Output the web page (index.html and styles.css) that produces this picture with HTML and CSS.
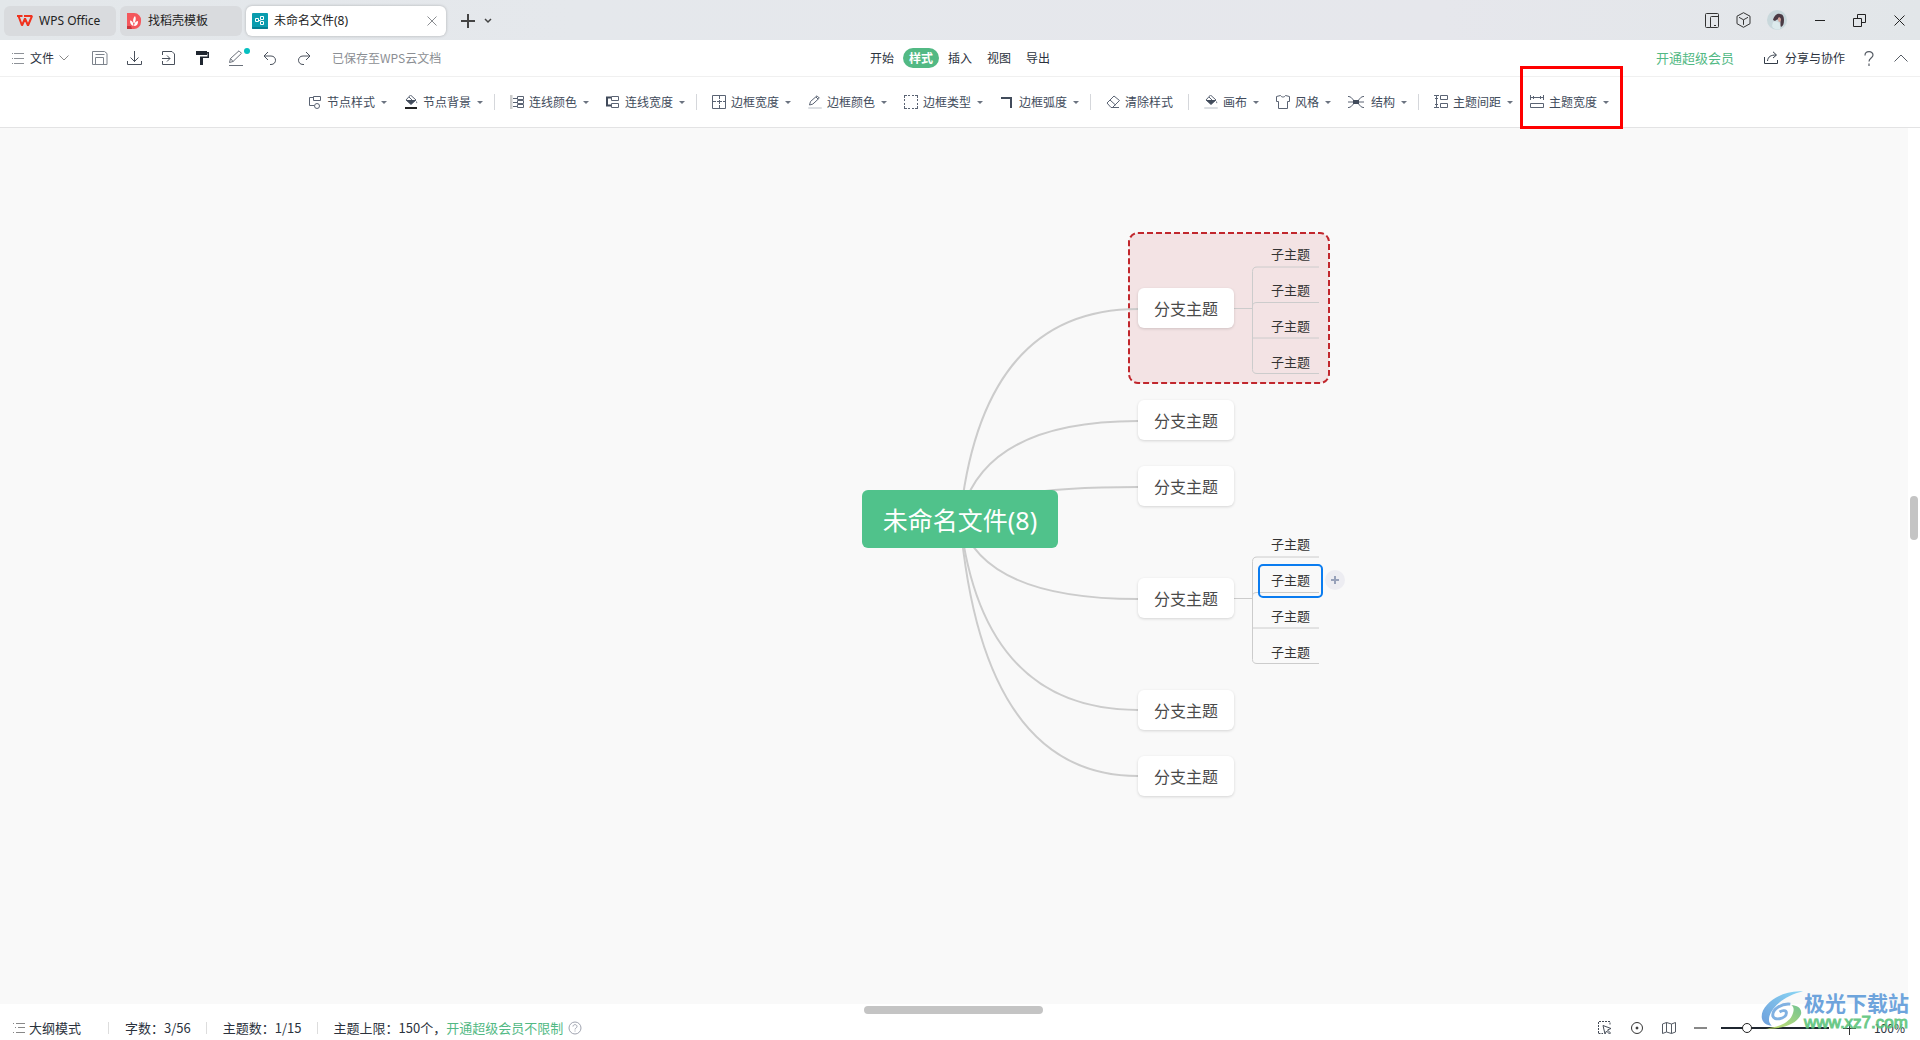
FILE: index.html
```html
<!DOCTYPE html>
<html lang="zh-CN">
<head>
<meta charset="utf-8">
<title>未命名文件(8)</title>
<link rel="stylesheet" href="styles.css">
</head>
<body>
<div class="app">
  <header class="titlebar">
    <nav class="tabs">
      <button class="tab tab-home">
        <svg width="16" height="12" viewBox="0 0 16 12" fill="none" stroke="#f0321e" stroke-width="2" stroke-linejoin="bevel"><path d="M0 1h5.500M1.500 1L5 10.500 8 3.500 11 10.500 15 1H7"/></svg>
        <span>WPS Office</span>
      </button>
      <button class="tab tab-docer">
        <svg width="16" height="16" viewBox="0 0 16 16"><path d="M1 0h7a7 7 0 0 1 7 8v1a7 7 0 0 1-7 7H1z" fill="#f4575c"/><path d="M1 13h4l1 3H1z" fill="#c9353b"/><path d="M7.500 13C5 12 4 10.500 4 7.500c1.800.3 2.700 1.300 3.200 3zM7.500 10C6.500 7 7.500 4.500 9 3c1.200 2 1 4.500-.5 7zM8 13c.2-3 1.500-4.500 4-5 .3 3-1.200 5-4 5z" fill="#fff"/></svg>
        <span>找稻壳模板</span>
      </button>
      <div class="tab tab-active">
        <svg width="16" height="16" viewBox="0 0 16 16"><rect width="16" height="16" rx="1" fill="#0a9cae"/><path d="M0 14h16v1a1 1 0 0 1-1 1H1a1 1 0 0 1-1-1z" fill="#067f93"/><path d="M3.500 5.500h3v3h-3zM6.500 7.500h2M8.500 3.500h3v3h-3zM8.500 8.500h3v3h-3z" fill="none" stroke="#fff"/></svg>
        <span>未命名文件(8)</span>
        <button class="icon-btn tab-close" aria-label="关闭"><svg width="10" height="10" viewBox="0 0 10 10" stroke="#8a8d91"><path d="M.5.5l9 9M9.500.5l-9 9"/></svg></button>
      </div>
      <button class="icon-btn tab-add" aria-label="新建"><svg width="14" height="14" viewBox="0 0 14 14" stroke="#444" stroke-width="2"><path d="M7 0v14M0 7h14"/></svg></button>
      <button class="icon-btn" aria-label="更多"><svg width="8" height="6" viewBox="0 0 8 6" fill="none" stroke="#444" stroke-width="1.500"><path d="M1 1l3 3 3-3"/></svg></button>
    </nav>
    <div class="window-tools">
      <button class="icon-btn" aria-label="分屏"><svg width="15" height="15" viewBox="0 0 15 15" fill="none" stroke="#333"><path d="M5.500 14.500H1.500a1 1 0 0 1-1-1v-12a1 1 0 0 1 1-1h11a1 1 0 0 1 1 1v12a1 1 0 0 1-1 1h-7V4.500a1 1 0 0 1 1-1h7M9 12.500h2"/></svg></button>
      <button class="icon-btn" aria-label="应用"><svg width="15" height="16" viewBox="0 0 15 16" fill="none" stroke="#333"><path d="M7.500.7l6.500 3.500v7.500l-6.500 3.600L1 11.700V4.200zM3 5.300l4.500 2.500L12 5.300M7.500 7.800v5"/></svg></button>
      <button class="icon-btn" aria-label="账号"><svg width="20" height="20" viewBox="0 0 20 20"><circle cx="10" cy="10" r="10" fill="#c9d8dc"/><path d="M6 10c1-4 4-7 7-6 3 0 4 3 4 6 0 4-1 6-3 7-1-2 0-4-1-7-2-2-4 0-5 1z" fill="#4a3a44"/><path d="M11 8c1-1 2-1 3 1 0 2-1 3-1 3-2 0-2-2-2-4z" fill="#d4a59c"/><path d="M6 12c3-1 6 0 7 2v5c-3 1-7 0-8-3z" fill="#dceaec"/></svg></button>
      <button class="icon-btn" aria-label="最小化"><svg width="10" height="11" viewBox="0 0 10 11" stroke="#222"><path d="M0 5.500h10"/></svg></button>
      <button class="icon-btn" aria-label="还原"><svg width="13" height="13" viewBox="0 0 13 13" fill="none" stroke="#222"><path d="M.5 4.500h8v8h-8zM4.500 4.500v-4h8v8h-4"/></svg></button>
      <button class="icon-btn" aria-label="关闭窗口"><svg width="11" height="11" viewBox="0 0 11 11" stroke="#222"><path d="M.5.500l10 10M10.500.500l-10 10"/></svg></button>
    </div>
  </header>

  <div class="menubar">
    <div class="quick">
      <button class="icon-btn file-btn">
        <svg width="13" height="12" viewBox="0 0 13 12" stroke="#8d9197"><path d="M0 1.500h1M2 1.500h10M0 6.500h1M2 6.500h10M0 11.500h1M2 11.500h10"/></svg>
        <span>文件</span>
        <svg width="10" height="6" viewBox="0 0 10 6" fill="none" stroke="#888"><path d="M.5.5L5 5 9.500.5"/></svg>
      </button>
      <div class="quick-icons">
      <button class="icon-btn" aria-label="保存"><svg width="16" height="16" viewBox="0 0 16 16" fill="none" stroke="#7d838c"><path d="M.5 1.500h12l2.500 2v11H.5zM3.500 14.500v-7h8v7M3.500 4.500h9"/></svg></button>
      <button class="icon-btn" aria-label="下载"><svg width="16" height="16" viewBox="0 0 16 16" fill="none" stroke="#4a515c"><path d="M8.500 1v11M4.500 7.500l4 4 4-4M1.500 11v3.500h14V11"/></svg></button>
      <button class="icon-btn" aria-label="导出"><svg width="16" height="16" viewBox="0 0 16 16" fill="none" stroke="#4a515c"><path d="M2.500 5V1.500H12l2.500 2.500v10.500h-12V11M2 8.500h8M7 5.500l3 3-3 3"/></svg></button>
      <button class="icon-btn" aria-label="格式刷"><svg width="16" height="16" viewBox="0 0 16 16" fill="#1f2630"><path d="M2 1h11v1h2v6H9v7H6V6.500h7.500v-3H13V5H2z"/></svg></button>
      <button class="icon-btn dotted" aria-label="画笔"><svg width="16" height="16" viewBox="0 0 16 16" fill="none" stroke="#6a707a"><path d="M1.500 12.500l1-4L11 .8l2.500 2.500-8.500 8.200zM2.500 8.500L5 11.500M1 15.500h14"/></svg></button>
      <button class="icon-btn" aria-label="撤销"><svg width="16" height="16" viewBox="0 0 16 16" fill="none" stroke="#4a515c"><path d="M6 2L2 6l4 4M2 6h7c6 0 6 8.500 0 8.500H8"/></svg></button>
      <button class="icon-btn" aria-label="重做"><svg width="16" height="16" viewBox="0 0 16 16" fill="none" stroke="#4a515c"><path d="M10 2l4 4-4 4M14 6H7c-6 0-6 8.500 0 8.500h1"/></svg></button>
      </div>
      <span class="saved">已保存至WPS云文档</span>
    </div>
    <nav class="modes">
      <button class="mode">开始</button>
      <button class="mode mode-on">样式</button>
      <button class="mode">插入</button>
      <button class="mode">视图</button>
      <button class="mode">导出</button>
    </nav>
    <div class="account">
      <a class="vip" href="#vip">开通超级会员</a>
      <button class="icon-btn share"><svg width="15" height="14" viewBox="0 0 15 14" fill="none" stroke="#333c48"><path d="M.5 6v6.500h13V9M3.500 10C4 5.500 7 4 12 4M9 .8L12.500 4 9 7"/></svg><span>分享与协作</span></button>
      <button class="icon-btn help" aria-label="帮助"><svg width="10" height="15" viewBox="0 0 10 15" fill="none" stroke="#555b64" stroke-width="1.200"><path d="M1 4.500C1-.5 9-.5 9 4c0 3-4 3-4 6.500M5 12.500V15"/></svg></button>
      <button class="icon-btn" aria-label="收起"><svg width="14" height="8" viewBox="0 0 14 8" fill="none" stroke="#555b64"><path d="M.5 7.500L7 1l6.500 6.500"/></svg></button>
    </div>
  </div>

  <div class="toolbar">
    <button class="tool"><svg class="ti" viewBox="0 0 14 14"><path d="M5.500 1.500h7v4h-7zM5 2.500H1.500v8H6"/><circle cx="9" cy="11" r="2.500"/></svg><span>节点样式</span><i class="caret"></i></button>
    <button class="tool"><svg class="ti" viewBox="0 0 14 14"><path d="M6.500 0L12 5 7 9.500 2 5zM5 2l3 3" /><path class="solid" d="M2 5h10L7 9.500z"/><path class="solid" d="M12.500 6c2 3-1 3 0 0z"/><path class="under-dark" d="M1 13h12"/></svg><span>节点背景</span><i class="caret"></i></button>
    <span class="sep"></span>
    <button class="tool"><svg class="ti" viewBox="0 0 14 14"><path class="under-grey" d="M1 0v14"/><path d="M7.500 1.500h6v3h-6zM7.500 5.500h6v3h-6zM7.500 9.500h6v3h-6zM3 3.500h4M3 7.500h4M3 11.500h4"/></svg><span>连线颜色</span><i class="caret"></i></button>
    <button class="tool"><svg class="ti" viewBox="0 0 14 14"><path d="M5.500 1.500h7v4h-7zM5.500 8.500h7v4h-7z"/><path class="thick" d="M5 2.500H1v8h4"/></svg><span>连线宽度</span><i class="caret"></i></button>
    <span class="sep"></span>
    <button class="tool"><svg class="ti" viewBox="0 0 14 14"><path d="M.5.5h13v13H.5z"/><path d="M7.500 1v3M7.500 5v4M7.500 10v3M1 6.500h3M5 6.500h5M11 6.500h2"/></svg><span>边框宽度</span><i class="caret"></i></button>
    <button class="tool"><svg class="ti" viewBox="0 0 14 14"><path d="M1.500 10l1-3.500L9 .8l2.300 2.300-6.500 6zM8 2l2 2"/><path class="light" d="M.5 12.500h13v1H.5z"/></svg><span>边框颜色</span><i class="caret"></i></button>
    <button class="tool"><svg class="ti" viewBox="0 0 14 14"><path d="M0 .5h3M4 .5h2M8 .5h2M11 .5h3M0 13.500h3M4 13.500h2M8 13.500h2M11 13.500h3M.5 1v2M.5 4v2M.5 8v2M.5 11v2M13.500 1v2M13.500 4v2M13.500 8v2M13.500 11v2"/></svg><span>边框类型</span><i class="caret"></i></button>
    <button class="tool"><svg class="ti" viewBox="0 0 14 14"><path class="thick" d="M1 3h10v10"/></svg><span>边框弧度</span><i class="caret"></i></button>
    <span class="sep"></span>
    <button class="tool tool-clear"><svg class="ti" viewBox="0 0 14 14"><path d="M1 8L8 1l5.500 4.500L6.500 12.500H5zM4 5l5.500 5M6 12.500h7"/></svg><span>清除样式</span></button>
    <span class="sep"></span>
    <button class="tool"><svg class="ti" viewBox="0 0 14 14"><path d="M6.500 0L12 5 7 9.500 2 5zM5 2l3 3"/><path class="solid" d="M2 5h10L7 9.500z"/><path class="solid" d="M12.500 6c2 3-1 3 0 0z"/><path class="light" d="M.5 12.500h13v1H.5z"/></svg><span>画布</span><i class="caret"></i></button>
    <button class="tool"><svg class="ti" viewBox="0 0 14 14"><path d="M4.500.5L.5 1.500v5h2v7h9v-7h2v-5l-4-1c-1 2-4 2-5 0z"/></svg><span>风格</span><i class="caret"></i></button>
    <button class="tool tool-structure"><svg class="ti ti-wide" viewBox="0 0 16 14"><path d="M0 1.500h1c3 0 4 5 7 5s4-5 7-5h1M0 12.500h1c3 0 4-5 7-5s4 5 7 5h1M0 7h16"/><path class="solid" d="M5 5h6v4H5z"/></svg><span>结构</span><i class="caret"></i></button>
    <span class="sep"></span>
    <button class="tool"><svg class="ti" viewBox="0 0 14 14"><path d="M0 .5h5M0 12.500h5M2.500 1v11M1 3.500h3M1 9.500h3M6.500 .5h7v4h-7zM6.500 8.500h7v4h-7z"/></svg><span>主题间距</span><i class="caret"></i></button>
    <button class="tool tool-marked"><svg class="ti" viewBox="0 0 14 14"><path d="M.5 0v5M13.500 0v5M1 2.500h12M3.500 1v3M10.500 1v3M.5 8.500h13v4H.5z"/></svg><span>主题宽度</span><i class="caret"></i></button>
  </div>

  <main class="workspace">
    <div class="canvas">
      <div class="stage">
        <svg class="links" viewBox="500 228 908 676" fill="none" stroke="#ccc">
          <rect x="1129" y="233" width="200" height="150" rx="9" fill="#c1272d" fill-opacity=".1" stroke="#c1272d" stroke-width="2" stroke-dasharray="6 3"/>
          <g stroke-width="2">
            <path d="M960 519Q982 309 1138 309"/>
            <path d="M960 519Q982 421 1138 421"/>
            <path d="M960 519Q982 487 1138 487"/>
            <path d="M960 519Q982 599 1138 599"/>
            <path d="M960 519Q982 710 1138 710"/>
            <path d="M960 519Q982 776 1138 776"/>
          </g>
          <path d="M1234 308.500h18M1319 267h-62q-4.500 0-4.500 4.500v98q0 4 4.500 4h62M1252.500 306q0-3.500 4.500-3.500h62M1252.500 338h66.500"/>
          <path d="M1234 598.500h18M1319 557h-62q-4.500 0-4.500 4.500v98q0 4 4.500 4h62M1252.500 596q0-3.500 4.500-3.500h62M1252.500 628h66.500"/>
        </svg>
        <div class="root">未命名文件(8)</div>
        <div class="branch b1">分支主题</div>
        <div class="branch b2">分支主题</div>
        <div class="branch b3">分支主题</div>
        <div class="branch b4">分支主题</div>
        <div class="branch b5">分支主题</div>
        <div class="branch b6">分支主题</div>
        <ul class="leaves l1"><li>子主题</li><li>子主题</li><li>子主题</li><li>子主题</li></ul>
        <ul class="leaves l2"><li>子主题</li><li class="selected">子主题</li><li>子主题</li><li>子主题</li></ul>
        <button class="add-node" aria-label="添加子主题"><svg width="8" height="8" viewBox="0 0 8 8" stroke="#98a2ba" stroke-width="2"><path d="M4 0v8M0 4h8"/></svg></button>
      </div>
    </div>
    <div class="vscroll"><div class="thumb"></div></div>
  </main>
  <div class="hscroll"><div class="thumb"></div></div>

  <footer class="status">
    <div class="stats">
      <button class="icon-btn outline"><svg width="12" height="12" viewBox="0 0 12 12" stroke="#888"><path d="M0 1.500h1M3 1.500h9M2 5.500h1M5 5.500h7M0 10.500h1M3 10.500h9"/></svg><span>大纲模式</span></button>
      <span class="stat">字数：3/56</span>
      <span class="stat">主题数：1/15</span>
      <span class="stat">主题上限：150个，<a class="vip" href="#limit">开通超级会员不限制</a></span>
      <button class="icon-btn tip" aria-label="说明"><svg width="14" height="14" viewBox="0 0 14 14" fill="none" stroke="#a0a4b0"><circle cx="7" cy="7" r="6"/><path d="M5 5.500c0-2.500 4-2.500 4 0C9 7 7 7 7 8.500M7 9.500v1"/></svg></button>
    </div>
    <div class="view">
      <button class="icon-btn" aria-label="框选"><svg width="14" height="14" viewBox="0 0 14 14" fill="none" stroke="#444b56"><path d="M.5 12V.5H12V4M.5 12.500H5" stroke-dasharray="2 1"/><path d="M5 4.500l8 3-3.500 1.500 3 3-1 1-3-3L7 13z"/></svg></button>
      <button class="icon-btn" aria-label="定位"><svg width="14" height="14" viewBox="0 0 14 14" fill="none" stroke="#333"><circle cx="7" cy="7" r="5.500"/><circle cx="7" cy="7" r="1" fill="#333"/></svg></button>
      <button class="icon-btn" aria-label="导航"><svg width="14" height="14" viewBox="0 0 14 14" fill="none" stroke="#555b64"><path d="M.5 3L4.500 1.500l5 1.500 4-1.500V11l-4 1.500-5-1.500-4 1.500zM4.500 1.500V11M9.500 3v9.500"/></svg></button>
      <button class="icon-btn" aria-label="缩小"><svg width="13" height="12" viewBox="0 0 13 12" stroke="#888" stroke-width="2"><path d="M0 6h13"/></svg></button>
      <input class="zoom" type="range" min="0" max="100" value="21" aria-label="缩放">
      <button class="icon-btn" aria-label="放大"><svg width="13" height="13" viewBox="0 0 13 13" stroke="#333"><path d="M6.500 0v13M0 6.500h13"/></svg></button>
      <span class="percent">100%</span>
    </div>
  </footer>

  <div class="watermark">
    <svg width="43" height="42" viewBox="0 0 44 42">
      <defs>
        <linearGradient id="wb" x1="1" y1="0" x2="0" y2="1"><stop offset="0" stop-color="#7fd4f5"/><stop offset="1" stop-color="#5f95d8"/></linearGradient>
        <linearGradient id="wg" x1="0" y1="1" x2="1" y2="0"><stop offset="0" stop-color="#c9e063"/><stop offset="1" stop-color="#63bd86"/></linearGradient>
      </defs>
      <path d="M43 1C20-1-2 16 1 29c1 4 5 7 10 7C5 31 9 21 18 13 25 7 33 3 43 1z" fill="url(#wb)"/>
      <path d="M31 15c6 0 11 3 10 9-3 9-17 16-36 15 12-1 24-6 27-14 2-5 2-8-1-10z" fill="url(#wg)"/>
      <path d="M30 14c-9-1-18 5-18 11 0 7 14 4 14-2 0-3-4-3-7-1" fill="none" stroke="#73a9df" stroke-width="3"/>
    </svg>
    <div class="watermark-text"><strong>极光下载站</strong><span>www.xz7.com</span></div>
  </div>
</div>
</body>
</html>
```
FILE: styles.css
```css
* { box-sizing: border-box; }

body {
  margin: 0;
  background: #fff;
  color: #2b323d;
  font: 12px/16px "Noto Sans CJK SC", sans-serif;
}

button {
  border: 0;
  padding: 0;
  background: none;
  color: inherit;
  font: inherit;
  cursor: pointer;
}

svg { display: block; flex: none; }

a { text-decoration: none; }

.app {
  position: relative;
  display: flex;
  flex-direction: column;
  min-height: 100vh;
  overflow: hidden;
}

.icon-btn { display: flex; align-items: center; }

/* title bar */
.titlebar {
  display: flex;
  justify-content: space-between;
  align-items: center;
  height: 40px;
  padding: 0 15px 0 4px;
  background: linear-gradient(90deg, #e3e7ea, #e5e8ec 30%, #e6e7ec 75%, #e2e6e9);
}

.tabs { display: flex; align-items: center; gap: 4px; padding-top: 2px; }

.tab {
  display: flex;
  align-items: center;
  gap: 6px;
  height: 30px;
  border-radius: 6px;
  background: #d9dbde;
  color: #222;
  font-family: "Noto Sans", "Noto Sans CJK SC", sans-serif;
}

.tab-home { width: 112px; padding-left: 13px; }
.tab-docer { width: 122px; padding-left: 6px; }

.tab-active {
  width: 200px;
  padding: 0 9px 0 6px;
  background: #fff;
  box-shadow: 0 0 3px rgba(0, 0, 0, .25);
}

.tab-close { margin-left: auto; }
.tab-add { margin: 0 5px 0 11px; }

.window-tools { display: flex; align-items: center; gap: 28px; }
.window-tools .icon-btn:nth-child(-n+2) { margin-right: -12px; }

/* menu row */
.menubar {
  display: grid;
  grid-template-columns: 1fr auto 1fr;
  align-items: center;
  height: 37px;
  padding: 0 12px;
  border-bottom: 1px solid #f0f0f0;
}

.quick { display: flex; align-items: center; }
.file-btn { gap: 5px; }
.quick-icons { display: flex; gap: 18px; margin: 0 20px 0 23px; }
.dotted { position: relative; }

.dotted::after {
  content: "";
  position: absolute;
  top: -2px;
  right: -6px;
  width: 6px;
  height: 6px;
  border-radius: 50%;
  background: #05bfc0;
}

.saved { color: #8b8e93; }

.modes { display: flex; gap: 3px; }

.mode {
  height: 20px;
  padding: 0 6px;
  border-radius: 10px;
}

.mode-on { background: #52b984; color: #fff; font-weight: bold; }

.account { display: flex; justify-content: flex-end; align-items: center; }
.vip { color: #52b984; font-size: 13px; }
.share { gap: 6px; margin-left: 30px; }
.help { margin: 0 20px 0 19px; }

/* style toolbar */
.toolbar {
  display: flex;
  justify-content: center;
  align-items: stretch;
  height: 51px;
  padding-right: 2px;
  border-bottom: 1px solid #e3e3e4;
}

.tool {
  position: relative;
  display: flex;
  align-items: center;
  padding: 0 9px 0 8px;
  color: #414b5b;
}

.ti {
  width: 14px;
  height: 14px;
  margin-right: 5px;
  fill: none;
  stroke: #5a6373;
}

.ti .solid { fill: #414b5b; stroke: none; }
.ti .thick { stroke: #414b5b; stroke-width: 2; }
.ti .light { stroke: #dcdfe3; }
.ti .under-dark { stroke: #222; stroke-width: 2; }
.ti .under-grey { stroke: #ccc; stroke-width: 3; }

.caret {
  margin-left: 6px;
  border: 3px solid transparent;
  border-top-color: #6b7380;
  border-bottom: 0;
}

.tool-clear { padding-right: 13px; }
.ti-wide { width: 16px; }
.tool-structure .ti { margin-right: 7px; }

.sep {
  align-self: center;
  width: 1px;
  height: 16px;
  margin: 0 7px 0 2px;
  background: #d5d7db;
}

.tool-marked::after {
  content: "";
  position: absolute;
  z-index: 2;
  inset: -11px -5px -2px -2px;
  border: 3px solid #f00;
}

/* mind map */
.workspace {
  flex: 1;
  display: grid;
  grid-template-columns: 1fr 12px;
}

.canvas {
  display: grid;
  place-content: center;
  background: #f9f9f9;
  overflow: hidden;
}

.stage { position: relative; width: 908px; height: 676px; }

.links { position: absolute; inset: 0; }

.root {
  position: absolute;
  left: 362px;
  top: 262px;
  width: 196px;
  height: 58px;
  border-radius: 6px;
  background: #50c28b;
  color: #fff;
  font: 25px/60px "Noto Sans", "Noto Sans CJK SC", sans-serif;
  text-align: center;
}

.branch {
  position: absolute;
  left: 638px;
  width: 96px;
  height: 40px;
  border-radius: 6px;
  background: #fff;
  box-shadow: 0 1px 3px rgba(0, 0, 0, .15);
  color: #4a4a4a;
  font-size: 16px;
  line-height: 40px;
  text-align: center;
}

.b1 { top: 60px; }
.b2 { top: 172px; }
.b3 { top: 238px; }
.b4 { top: 350px; }
.b5 { top: 462px; }
.b6 { top: 528px; }

.leaves {
  position: absolute;
  left: 758px;
  display: grid;
  gap: 4px;
  width: 65px;
  margin: 0;
  padding: 0;
  list-style: none;
  color: #333;
  font-size: 13px;
  line-height: 30px;
  text-align: center;
}

.leaves li { height: 32px; }
.l1 { top: 11px; }
.l2 { top: 301px; }

.selected { position: relative; }

.selected::after {
  content: "";
  position: absolute;
  inset: -1px 0;
  border: 2px solid #0a7cf0;
  border-radius: 5px;
}

.add-node {
  position: absolute;
  left: 825px;
  top: 342px;
  display: grid;
  place-content: center;
  width: 20px;
  height: 20px;
  border-radius: 50%;
  background: #ededf2;
}

/* scroll bars */
.thumb { border-radius: 4px; background: #c4c4c4; }

.vscroll {
  display: grid;
  grid-template-rows: 42fr 5fr 53fr;
  padding: 0 2px;
}

.vscroll .thumb { grid-row: 2; }

.hscroll {
  display: grid;
  grid-template-columns: 450fr 93fr 457fr;
  height: 12px;
  padding: 2px 0;
}

.hscroll .thumb { grid-column: 2; }

/* status bar */
.status {
  display: flex;
  justify-content: space-between;
  align-items: center;
  height: 24px;
  padding: 0 15px 0 13px;
  font-size: 13px;
}

.stats, .view { display: flex; align-items: center; }
.outline { gap: 4px; margin-right: 27px; }
.stat + .stat { margin-left: 15px; }

.stat::before {
  content: "";
  display: inline-block;
  width: 1px;
  height: 12px;
  margin-right: 16px;
  background: #ddd;
  vertical-align: -1px;
}

.tip { margin-left: 5px; }
.view { gap: 18px; }
.percent { font-size: 12px; }

.zoom {
  width: 108px;
  height: 12px;
  margin: 0 -4px;
  appearance: none;
  background: linear-gradient(#1f2630, #1f2630) center / 100% 2px no-repeat;
}

.zoom::-webkit-slider-thumb {
  appearance: none;
  width: 10px;
  height: 10px;
  border: 1px solid #222;
  border-radius: 50%;
  background: #fff;
}

/* site mark over the lower right corner */
.watermark {
  position: absolute;
  right: 11px;
  bottom: 8px;
  display: flex;
  align-items: center;
  opacity: .9;
  pointer-events: none;
}

.watermark-text { display: grid; }
.watermark-text strong { color: #5f9bd9; font-size: 21px; line-height: 24px; }
.watermark-text span { color: #5cc47c; font: 17px/18px "Liberation Sans", sans-serif; -webkit-text-stroke: 1px #5cc47c; }
```
